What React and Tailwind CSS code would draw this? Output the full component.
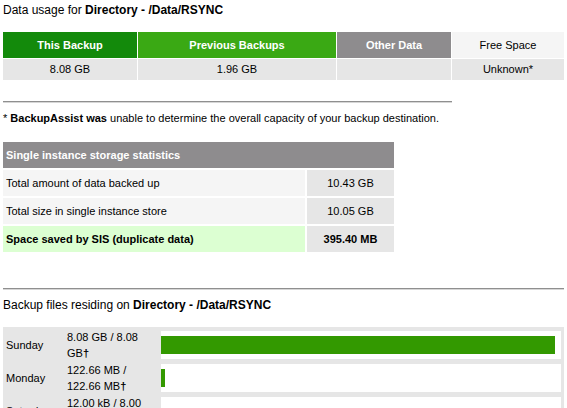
import React from 'react';

const usage = [
  { label: 'This Backup', value: '8.08 GB', head: 'bg-[#138a0b] text-white font-bold' },
  { label: 'Previous Backups', value: '1.96 GB', head: 'bg-[#3aa914] text-white font-bold' },
  { label: 'Other Data', value: '', head: 'bg-[#8e8c8e] text-white font-bold' },
  { label: 'Free Space', value: 'Unknown*', head: 'bg-[#f5f5f5] text-black' },
];

const sisRows = [
  { label: 'Total amount of data backed up', value: '10.43 GB' },
  { label: 'Total size in single instance store', value: '10.05 GB' },
  { label: 'Space saved by SIS (duplicate data)', value: '395.40 MB', hl: true },
];

const backups = [
  { day: 'Sunday', size: ['8.08 GB / 8.08', 'GB'], pct: 100 },
  { day: 'Monday', size: ['122.66 MB /', '122.66 MB'], pct: 1 },
  { day: 'Saturday', size: ['12.00 kB / 8.00', 'kB'], pct: 0 },
];

const Rule = ({ w }) => (
  <div className={`${w} h-[2px] border-t border-[#8f8f8f] bg-[#d6d6d6]`}></div>
);

const App = () => {
  return (
    <div
      className="w-[567px] h-[408px] overflow-hidden bg-white text-black text-[11px] pl-[3px]"
      style={{ fontFamily: '"Liberation Sans", Arial, sans-serif' }}
    >
      {/* DATA USAGE */}
      <p className="text-[12px] leading-[14px] pt-[3px]">
        Data usage for <b>Directory - /Data/RSYNC</b>
      </p>

      <div className="mt-[15px] grid grid-cols-[134px_198px_114px_112px] gap-[1px]">
        {usage.map((c) => (
          <div key={c.label} className={`h-[26px] flex items-center justify-center ${c.head}`}>
            {c.label}
          </div>
        ))}
        {usage.map((c) => (
          <div key={c.label + 'v'} className="h-[21px] flex items-center justify-center bg-[#e6e6e6]">
            {c.value}
          </div>
        ))}
      </div>

      <div className="mt-[21px]">
        <Rule w="w-[449px]" />
      </div>

      <p className="mt-[9px] leading-[13px]">
        * <b>BackupAssist was</b> unable to determine the overall capacity of your backup destination.
      </p>

      {/* SIS STATS */}
      <div className="mt-[17px] w-[391px]">
        <div className="h-[26px] bg-[#8e8c8e] text-white font-bold flex items-center px-[3px]">
          Single instance storage statistics
        </div>
        <div className="mt-[2px] grid grid-cols-[302px_87px] gap-[2px]">
          {sisRows.map((r) => (
            <React.Fragment key={r.label}>
              <div
                className={`h-[26px] flex items-center px-[3px] ${
                  r.hl ? 'bg-[#dcffd2] font-bold' : 'bg-[#f5f5f5]'
                }`}
              >
                {r.label}
              </div>
              <div
                className={`h-[26px] flex items-center justify-center bg-[#e6e6e6] ${
                  r.hl ? 'font-bold' : ''
                }`}
              >
                {r.value}
              </div>
            </React.Fragment>
          ))}
        </div>
      </div>

      <div className="mt-[36px]">
        <Rule w="w-[561px]" />
      </div>

      {/* BACKUP FILES */}
      <p className="mt-[8px] text-[12px] leading-[14px]">
        Backup files residing on <b>Directory - /Data/RSYNC</b>
      </p>

      <div className="mt-[15px] w-[561px] bg-[#e6e6e6] pt-[2px] flex flex-col gap-[1px]">
        {backups.map((b) => (
          <div key={b.day} className="h-[32px] flex items-center">
            <div className="w-[64px] pl-[3px]">{b.day}</div>
            <div className="w-[94px] leading-[16px]">
              <div>{b.size[0]}</div>
              <div>
                {b.size[1]}
                <span className="font-bold">†</span>
              </div>
            </div>
            <div className="flex-1 mr-[3px] h-[28px] bg-white flex items-center">
              <div className="h-[18px] bg-[#339900]" style={{ width: b.pct ? `${Math.max(b.pct, 1) * 3.94}px` : 0, minWidth: b.pct ? '4px' : 0 }}></div>
            </div>
          </div>
        ))}
      </div>
    </div>
  );
};

export default App;
